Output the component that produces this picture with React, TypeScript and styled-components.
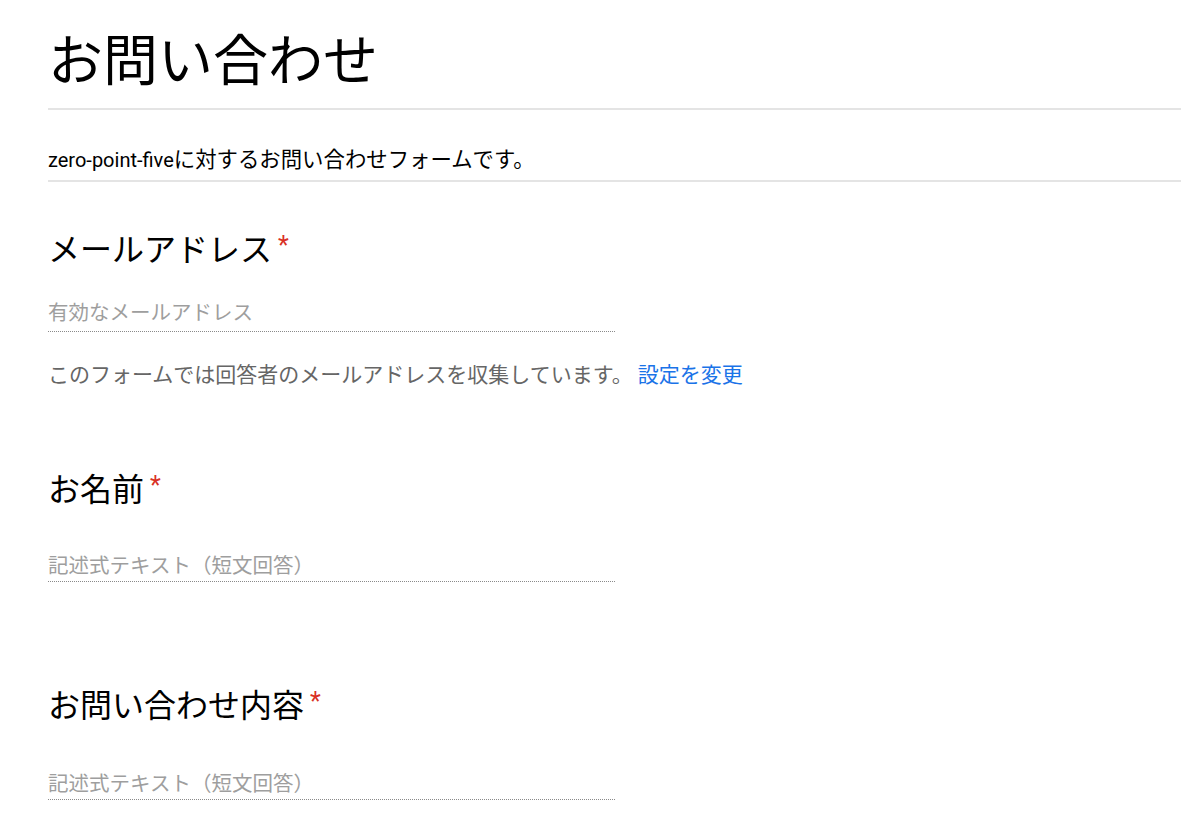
import React from "react";
import styled, { createGlobalStyle } from "styled-components";

const GlobalStyle = createGlobalStyle`
  html, body {
    margin: 0;
    padding: 0;
    background: #ffffff;
  }
  body {
    font-family: Roboto, "Noto Sans CJK JP", "Noto Sans", sans-serif;
    color: #202124;
  }
`;

const Page = styled.div`
  padding: 34px 19px 40px 48px;
  display: flex;
  flex-direction: column;
`;

const Title = styled.h1`
  margin: 0;
  font-size: 55px;
  line-height: 55px;
  font-weight: 400;
  color: #000000;
`;

const Divider = styled.div<{ $top: number }>`
  margin-top: ${(p) => p.$top}px;
  height: 2px;
  background: #e4e4e4;
`;

const Description = styled.div`
  margin-top: 39px;
  font-size: 21.4px;
  line-height: 21px;
  color: #000000;
`;

const Latin = styled.span`
  font-size: 20px;
`;

const QuestionTitle = styled.h2<{ $top: number }>`
  margin: ${(p) => p.$top}px 0 0 0;
  font-size: 32px;
  line-height: 32px;
  font-weight: 400;
  color: #000000;
  display: flex;
  align-items: flex-start;
`;

const Required = styled.span`
  color: #d93025;
  font-size: 25px;
  line-height: 20px;
  margin-left: 6px;
  margin-top: 2px;
`;

const AnswerField = styled.div<{ $top: number; $pad: number }>`
  margin-top: ${(p) => p.$top}px;
  width: 567px;
  padding-bottom: ${(p) => p.$pad}px;
  border-bottom: 1px dotted #8a8a8a;
  font-size: 20.5px;
  line-height: 20px;
  color: #9e9e9e;
`;

const Note = styled.div`
  margin-top: 33px;
  font-size: 21px;
  line-height: 21px;
  color: #666666;
  display: flex;
  align-items: center;
`;

const SettingsLink = styled.a`
  margin-left: 5px;
  color: #1a73e8;
  text-decoration: none;
  cursor: pointer;
`;

export default function App() {
  return (
    <>
      <GlobalStyle />
      <Page>
        <Title>お問い合わせ</Title>
        <Divider $top={19} />
        <Description>
          <Latin>zero-point-five</Latin>に対するお問い合わせフォームです。
        </Description>
        <Divider $top={9} />

        <QuestionTitle $top={52}>
          メールアドレス<Required>*</Required>
        </QuestionTitle>
        <AnswerField $top={37} $pad={8}>有効なメールアドレス</AnswerField>
        <Note>
          このフォームでは回答者のメールアドレスを収集しています。
          <SettingsLink>設定を変更</SettingsLink>
        </Note>

        <QuestionTitle $top={88}>
          お名前<Required>*</Required>
        </QuestionTitle>
        <AnswerField $top={50} $pad={5}>記述式テキスト（短文回答）</AnswerField>

        <QuestionTitle $top={108}>
          お問い合わせ内容<Required>*</Required>
        </QuestionTitle>
        <AnswerField $top={52} $pad={5}>記述式テキスト（短文回答）</AnswerField>
      </Page>
    </>
  );
}
